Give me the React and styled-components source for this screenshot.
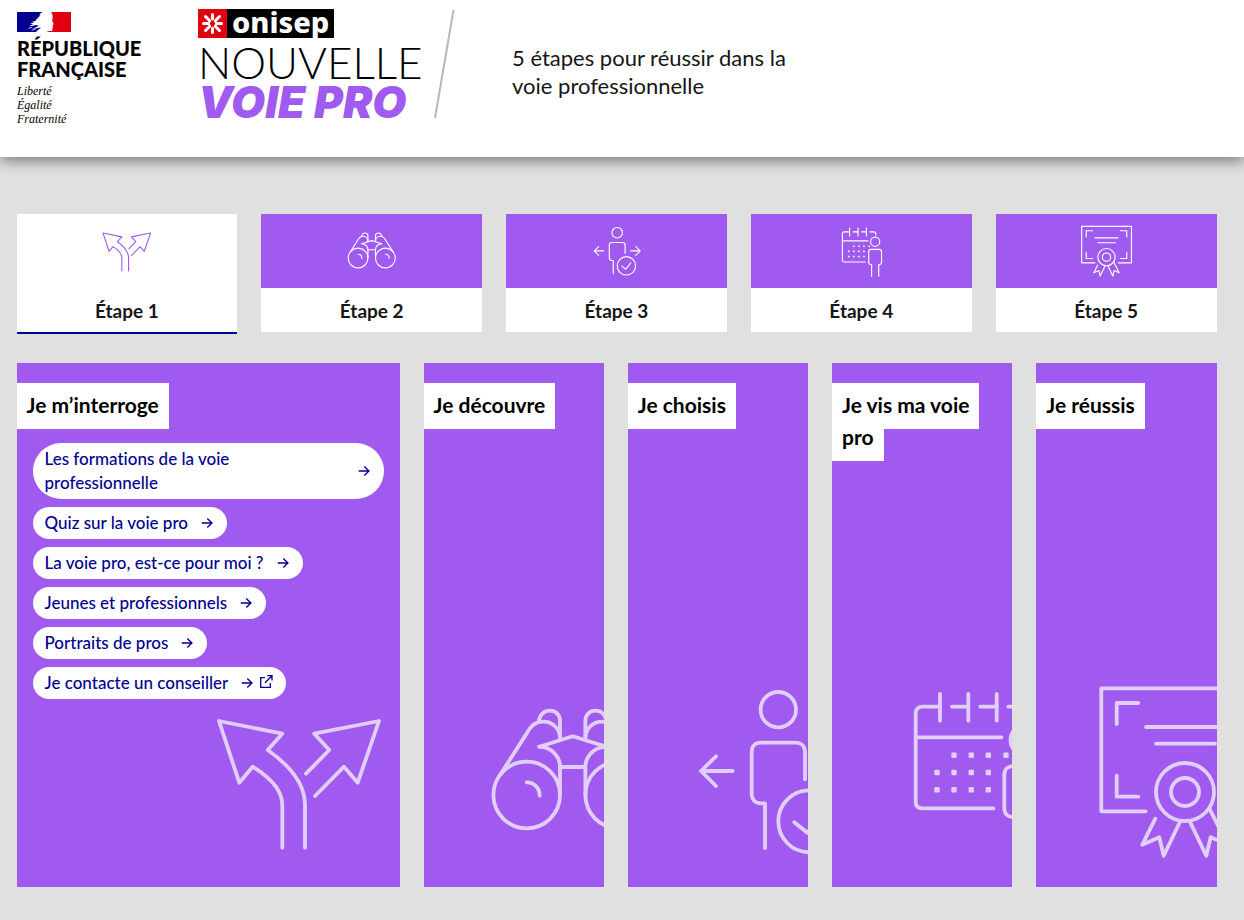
import { useState } from 'react'
import styled, { createGlobalStyle } from 'styled-components'

const GlobalStyle = createGlobalStyle`
  :root {
    --purple: #a05af0;
    --blue: #000091;
    --red: #e1000f;
    --grey: #e0e0e0;
    --text: #161616;
    --white: #ffffff;
  }

  * {
    box-sizing: border-box;
  }

  body {
    margin: 0;
    min-height: 100vh;
    background: var(--grey);
    color: var(--text);
    font-family: Lato, 'Noto Sans', sans-serif;
  }
`

const StyledHeader = styled.header`
  display: flex;
  align-items: flex-start;
  min-height: 157px;
  padding: 9px 17px 31px;
  background: var(--white);
  box-shadow: 0 3px 14px rgba(0, 0, 0, 0.5);
`

const StyledRepublic = styled.a`
  display: flex;
  flex-direction: column;
  flex: none;
  width: 181px;
  padding-top: 3px;
  color: #000;
  text-decoration: none;

  strong {
    margin-top: 6px;
    font-size: 20px;
    font-weight: 900;
    line-height: 21px;
  }

  em {
    margin-top: 4px;
    font-family: 'Liberation Serif', serif;
    font-size: 12px;
    line-height: 14px;
  }
`

const StyledBrand = styled.a`
  display: flex;
  flex-direction: column;
  flex: none;
  width: 236px;
  color: #000;
  text-decoration: none;
`

const StyledOnisep = styled.span`
  display: flex;
  align-self: flex-start;
  height: 29px;
  background: #000;
  color: var(--white);
  font-family: 'Noto Sans', sans-serif;
  font-size: 29px;
  font-weight: 800;
  line-height: 25px;

  svg {
    background: var(--red);
  }

  span {
    padding: 0 5px;
  }
`

const StyledNouvelle = styled.span`
  font-size: 44px;
  font-weight: 300;
  line-height: 48px;
`

const StyledVoiePro = styled.span`
  color: var(--purple);
  font-family: Inter, sans-serif;
  font-size: 44px;
  font-style: italic;
  font-weight: 900;
  line-height: 32px;
`

const StyledBaseline = styled.p`
  max-width: 340px;
  margin: 35px 0 0 57px;
  font-size: 22px;
  line-height: 28px;
`

const StyledMain = styled.main`
  padding: 57px 11px 33px 0;
`

const StyledTabs = styled.nav`
  display: grid;
  grid-template-columns: repeat(5, minmax(0, 1fr));
  align-items: start;
  gap: 24px;
  max-width: 1200px;
  height: 149px;
  margin: 0 auto;
`

const StyledTab = styled.button`
  display: flex;
  flex-direction: column;
  padding: 0;
  border: 0;
  border-bottom: ${({ $active }) => ($active ? '2px solid var(--blue)' : '0')};
  background: var(--white);
  color: var(--text);
  font-family: inherit;
  font-size: 19px;
  font-weight: 700;
  line-height: 46px;
  cursor: pointer;
`

const StyledTabArt = styled.span`
  display: flex;
  align-items: center;
  justify-content: center;
  align-self: stretch;
  height: 74px;
  padding-bottom: ${({ $active }) => ($active ? '6px' : '0')};
  background: ${({ $active }) => ($active ? 'var(--white)' : 'var(--purple)')};
  color: ${({ $active }) => ($active ? 'var(--purple)' : 'var(--white)')};
`

const StyledTabLabel = styled.span`
  align-self: center;
  height: 44px;
`

const StyledPanels = styled.div`
  display: grid;
  grid-template-columns: minmax(0, 17fr) repeat(4, minmax(0, 8fr));
  gap: 24px;
  max-width: 1200px;
  margin: 0 auto;
`

const StyledPanel = styled.section`
  position: relative;
  min-height: 524px;
  padding-top: 26px;
  overflow: hidden;
  background: var(--purple);
`

const StyledPanelTitle = styled.h2`
  margin: 0 24px 0 0;
  color: #000;
  font-size: 21px;
  font-weight: 700;
  line-height: 32px;

  span {
    padding: 9px 10px 12px;
    background: var(--white);
    box-decoration-break: clone;
    -webkit-box-decoration-break: clone;
  }
`

const StyledPanelArt = styled.div`
  position: absolute;
  right: ${({ $open }) => ($open ? '6px' : '-64px')};
  bottom: 18px;
  height: 192px;
  color: var(--white);
  opacity: 0.7;
`

const StyledLinks = styled.ul`
  display: flex;
  flex-direction: column;
  align-items: flex-start;
  gap: 8px;
  margin: 22px 16px 0;
  padding: 0;
  list-style: none;
`

const StyledLink = styled.a`
  display: flex;
  align-items: center;
  gap: 11px;
  padding: 4px 12px;
  border-radius: 28px;
  background: var(--white);
  color: var(--blue);
  font-size: 17px;
  font-variant-ligatures: none;
  font-weight: 500;
  line-height: 24px;
  text-decoration: none;

  &:hover,
  &:focus {
    text-decoration: underline;
  }
`

const StyledLinkIcons = styled.span`
  display: flex;
  flex: none;
  gap: 3px;
`

const ForkIcon = () => (
  <>
    <path d="M103 170.7V128C103 106 87 88 65.7 73L80.3 56.7 17 44 37.3 105.7 50.7 89.7C69 101 80.3 114 80.3 128V170.7" />
    <path d="M104 96.7 127.3 73 112.3 56.7 177 44 155.7 105.7 142 89.7 113 119" />
  </>
)

const Barrel = () => (
  <>
    <circle cx="50.7" cy="118" r="33.3" />
    <path d="M24.7 97 54 51.3C58 46 62 44.7 67.3 44.7C77 44.7 84 52 84 61.3" />
    <path d="M62.5 45C64 37.5 68 33.7 74 33.7C80 33.7 84 38 84 43.7V61.3" />
    <path d="M63.3 69.7C75 70 84 79 84 89.7V118" />
  </>
)

const BinocularsIcon = () => (
  <>
    <Barrel />
    <g transform="translate(193.4 0) scale(-1 1)">
      <Barrel />
    </g>
    <path d="M63.3 69.7 96.7 59.3 130 69.7M84 90H109.3" />
    <path d="M50.7 105.3C58 105.3 63.7 111 63.7 118.7M142.7 105.3C150 105.3 155.7 111 155.7 118.7" />
  </>
)

const PersonIcon = () => (
  <>
    <circle cx="98.3" cy="32.7" r="17.7" />
    <path d="M125 102.3V74.7C125 69 121 65.7 116 65.7H80.7C75 65.7 71.7 69.5 71.7 74.7V117C71.7 122.5 75.5 126.3 80.7 126.3H85V171" />
    <circle cx="129.3" cy="144.3" r="31" />
    <path d="M114.3 145.3 127.3 155.7 144 134" />
    <path d="M52.7 94H21M36 79.3 21 94 36 109M144 94H175.7M160.7 79.3 175.7 94 160.7 109" />
  </>
)

const dots = [
  [70, 78.3], [87.3, 78.3], [104.3, 78.3], [122, 78.3],
  [53, 95.5], [70, 95.5], [87.3, 95.5], [104.3, 95.5],
  [53, 112.7], [70, 112.7], [87.3, 112.7], [104.3, 112.7],
]

const CalendarIcon = () => (
  <>
    <path d="M56 29.7H38.7C34 29.7 31.7 32.5 31.7 36.3V125C31.7 129 34 131.3 38 131.3H109.5" />
    <path d="M31.7 60.3H117.5M56 17V43.7M84.3 17V43.7M112.7 17V43.7" />
    <path d="M68 29.7H84.3M96.3 29.7H112.7M124.3 29.7H137C141.5 29.7 144 32 144 36V40" />
    {dots.map(([x, y]) => (
      <rect key={`${x}-${y}`} x={x - 2.7} y={y - 2.7} width="5.4" height="5.4" rx="1" fill="currentColor" stroke="none" />
    ))}
    <circle cx="142" cy="63" r="15.5" />
    <path d="M130 179V140.3C124 140.3 120.3 137 120.3 131V98C120.3 92.5 124 89 129 89H154.5C160 89 163.5 92.5 163.5 98V131C163.5 137 160 140.3 154 140.3V179" />
  </>
)

const DiplomaIcon = () => (
  <>
    <path d="M56.7 134.3H12.3V11.3H180V134.3H136" />
    <path d="M49.3 26H27.7V47M27.7 98.7V119.7H49.3M142.7 26H164.3V47M164.3 98.7V119.7H142.7" />
    <path d="M57 50H135M67 66.7H126" />
    <circle cx="96" cy="115" r="29" />
    <circle cx="96" cy="115" r="14" />
    <path d="M66.3 141.7 53.3 167.7 70.3 160.3 74.7 178.7 91 144.7M120.3 131.3 138.7 167.7 121.7 160.3 117.3 178.7 101 144.7" />
  </>
)

const Pictogram = ({ icon: Icon, size }) => (
  <svg
    width={size}
    height={size}
    viewBox="0 0 192 192"
    fill="none"
    stroke="currentColor"
    strokeWidth="3.8"
    strokeLinecap="round"
    strokeLinejoin="round"
    aria-hidden="true"
  >
    <Icon />
  </svg>
)

const ArrowIcon = () => (
  <svg width="16" height="16" viewBox="0 0 16 16" fill="none" stroke="currentColor" strokeWidth="1.4" aria-hidden="true">
    <path d="M2.7 8H13M8.3 3.4 12.9 8 8.3 12.6" />
  </svg>
)

const ExternalIcon = () => (
  <svg width="16" height="16" viewBox="0 0 16 16" fill="none" stroke="currentColor" strokeWidth="1.3" aria-hidden="true">
    <path d="M7 2.7H2.7V12.3H12.3V8M9.3 .7H14V5.4M14 .7 7 7.7" />
  </svg>
)

const Flag = () => (
  <svg width="54" height="20" viewBox="0 0 162 60" aria-hidden="true">
    <path fill="#fff" d="M0 0H162V60H0z" />
    <path
      fill="#000091"
      d="M0 0H76C71 3 68 7 67 11L71 10C65 15 59 21 55 27L43 30 52 30 39 36 49 36 36 43 45 42 56 39 66 41 57 46 45 51 62 48 72 47C67 51 61 54 57 60H0z"
    />
    <path
      fill="#e1000f"
      d="M102 0H162V60H89C92 57 97 56 103 57C107 56 106 53 106 50C109 48 107 46 106 44C109 43 108 40 107 38C112 37 110 34 106 28C104 24 108 20 107 14C107 8 105 4 102 0z"
    />
    <path stroke="#fff" strokeWidth="2" fill="none" d="M44 55 58 50M34 49 45 46" />
  </svg>
)

const steps = [
  { label: 'Étape 1', title: 'Je m’interroge', icon: ForkIcon },
  { label: 'Étape 2', title: 'Je découvre', icon: BinocularsIcon },
  { label: 'Étape 3', title: 'Je choisis', icon: PersonIcon },
  { label: 'Étape 4', title: 'Je vis ma voie pro', icon: CalendarIcon },
  { label: 'Étape 5', title: 'Je réussis', icon: DiplomaIcon },
]

const links = [
  { label: 'Les formations de la voie professionnelle' },
  { label: 'Quiz sur la voie pro' },
  { label: 'La voie pro, est-ce pour moi ?' },
  { label: 'Jeunes et professionnels' },
  { label: 'Portraits de pros' },
  { label: 'Je contacte un conseiller', external: true },
]

const Header = () => (
  <StyledHeader>
    <StyledRepublic href="#">
      <Flag />
      <strong>
        RÉPUBLIQUE
        <br />
        FRANÇAISE
      </strong>
      <em>
        Liberté
        <br />
        Égalité
        <br />
        Fraternité
      </em>
    </StyledRepublic>
    <StyledBrand href="#">
      <StyledOnisep>
        <svg width="29" height="29" viewBox="0 0 29 29" fill="none" stroke="#fff" strokeWidth="3" strokeLinecap="round" aria-hidden="true">
          <path d="M14.5 5.5V10M14.5 19V23.5M5.5 14.5H10M19 14.5H23.5M7.5 7.5 11.5 11.5M17.5 17.5 21.5 21.5M21.5 7.5 17.5 11.5M11.5 17.5 7.5 21.5" />
          <path d="M12 12 10.5 14.5 12 17M17 12 18.5 14.5 17 17" strokeWidth="2" />
        </svg>
        <span>onisep</span>
      </StyledOnisep>
      <StyledNouvelle>NOUVELLE</StyledNouvelle>
      <StyledVoiePro>VOIE PRO</StyledVoiePro>
    </StyledBrand>
    <svg width="21" height="110" viewBox="0 0 21 110" aria-hidden="true">
      <path d="M19.5 1 1 109" stroke="#b8b8b8" strokeWidth="2" />
    </svg>
    <StyledBaseline>
      5 étapes pour réussir dans la
      <br />
      voie professionnelle
    </StyledBaseline>
  </StyledHeader>
)

const App = () => {
  const [active, setActive] = useState(0)

  return (
    <>
      <GlobalStyle />
      <Header />
      <StyledMain>
        <StyledTabs>
          {steps.map(({ label, icon }, i) => (
            <StyledTab key={label} type="button" $active={i === active} onClick={() => setActive(i)}>
              <StyledTabArt $active={i === active}>
                <Pictogram icon={icon} size={57} />
              </StyledTabArt>
              <StyledTabLabel>{label}</StyledTabLabel>
            </StyledTab>
          ))}
        </StyledTabs>
        <StyledPanels>
          {steps.map(({ title, icon }, i) => (
            <StyledPanel key={title}>
              <StyledPanelTitle>
                <span>{title}</span>
              </StyledPanelTitle>
              {i === 0 && (
                <StyledLinks>
                  {links.map(({ label, external }) => (
                    <li key={label}>
                      <StyledLink href="#">
                        {label}
                        <StyledLinkIcons>
                          <ArrowIcon />
                          {external && <ExternalIcon />}
                        </StyledLinkIcons>
                      </StyledLink>
                    </li>
                  ))}
                </StyledLinks>
              )}
              <StyledPanelArt $open={i === 0}>
                <Pictogram icon={icon} size={192} />
              </StyledPanelArt>
            </StyledPanel>
          ))}
        </StyledPanels>
      </StyledMain>
    </>
  )
}

export default App
